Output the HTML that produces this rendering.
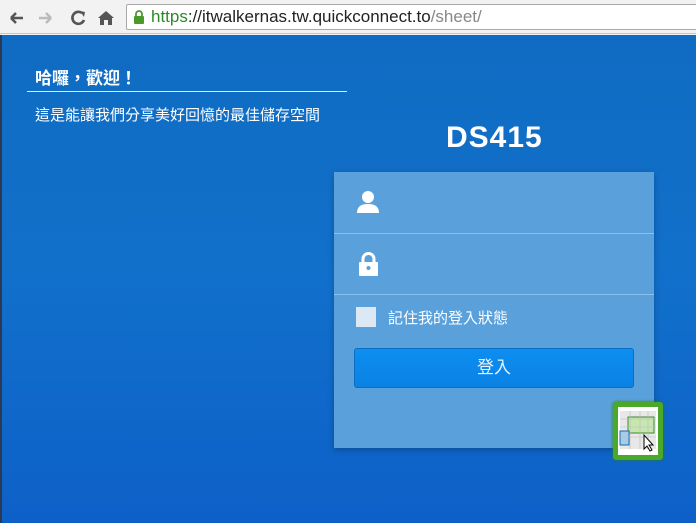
<!DOCTYPE html>
<html><head><meta charset="utf-8"><style>
*{margin:0;padding:0;box-sizing:border-box}
body{width:696px;height:523px;overflow:hidden;position:relative;font-family:"Liberation Sans","Noto Sans CJK TC",sans-serif;background:#f2f2f2}
.bar{position:absolute;left:0;top:0;width:696px;height:34px;background:#f2f2f2;border-bottom:1px solid #c8c8c8}
.url{position:absolute;left:126px;top:4px;width:580px;height:26px;background:#fff;border:1px solid #a9a9a9;border-radius:2px;font-size:17px;line-height:24px;padding-left:24px;color:#222}
.main{position:absolute;left:0;top:35px;width:696px;height:488px;background:linear-gradient(180deg,#106cc2 0%,#1170cb 50%,#0d60c8 100%);border-left:2px solid #2a3a55}
.panel{position:absolute;left:334px;top:172px;width:320px;height:276px;background:#5aa1dc;box-shadow:0 2px 6px rgba(0,0,0,.25)}
.line{position:absolute;left:0;width:320px;height:1px;background:#8cc0ea}
.btn{position:absolute;left:20px;top:176px;width:280px;height:40px;background:linear-gradient(#0d8ef0,#0a82e4);border:1px solid #0a6fc4;border-radius:3px;color:#e8f4ff;font-size:17px;text-align:center;line-height:38px}
</style></head><body>
<div class="bar">
<svg style="position:absolute;left:8px;top:9px" width="110" height="18">
<path d="M3 9h12M3 9l5-5M3 9l5 5" stroke="#555" stroke-width="2.5" fill="none"/>
<path d="M31 9h12M43 9l-5-5M43 9l-5 5" stroke="#bbb" stroke-width="2.5" fill="none"/>
<path d="M74 4a6 6 0 1 0 2 7" stroke="#555" stroke-width="2.6" fill="none"/><path d="M72 2l5 1-1 5z" fill="#555"/>
<path d="M90 9l8-7 8 7h-2v7h-4v-5h-4v5h-4v-7z" fill="#555"/>
</svg>
<div class="url"><svg style="position:absolute;left:6px;top:5px" width="12" height="14"><path d="M3 6V4a3 3 0 0 1 6 0v2" stroke="#4a9a2a" stroke-width="1.8" fill="none"/><rect x="1" y="6" width="10" height="8" rx="1" fill="#4a9a2a"/></svg><span style="color:#2a8a2a">https</span>://itwalkernas.tw.quickconnect.to<span style="color:#888">/sheet/</span></div>
</div>
<div class="main">
<div style="position:absolute;left:33px;top:29px;color:#fff;font-size:17px;font-weight:bold">哈囉，歡迎！</div>
<div style="position:absolute;left:25px;top:56px;width:320px;height:1px;background:#e0ecf8"></div>
<div style="position:absolute;left:33px;top:69px;color:#fff;font-size:15px">這是能讓我們分享美好回憶的最佳儲存空間</div>
<div style="position:absolute;left:444px;top:86px;color:#fff;font-size:30px;font-weight:bold;letter-spacing:1px">DS415</div>
</div>
<div class="panel">
<svg style="position:absolute;left:22px;top:17px" width="26" height="26"><circle cx="12" cy="8" r="6" fill="#fff"/><path d="M1 24c0-7 5-9 11-9s11 2 11 9z" fill="#fff"/></svg>
<div class="line" style="top:61px"></div>
<svg style="position:absolute;left:24px;top:79px" width="22" height="26"><path d="M5 11V8a5.5 5.5 0 0 1 11 0v3" stroke="#fff" stroke-width="3" fill="none"/><rect x="1" y="11" width="19" height="14" rx="1" fill="#fff"/><circle cx="10.5" cy="17" r="2" fill="#5aa1dc"/></svg>
<div class="line" style="top:122px"></div>
<div style="position:absolute;left:22px;top:135px;width:20px;height:20px;background:#dce9f5"></div>
<div style="position:absolute;left:54px;top:135px;color:#fff;font-size:15px">記住我的登入狀態</div>
<div class="btn">登入</div>
</div>
<div style="position:absolute;left:613px;top:402px;width:50px;height:58px;background:#4ca82a;border-radius:3px;box-shadow:0 0 3px #2d7d12">
<svg style="position:absolute;left:5px;top:5px" width="40" height="48"><rect width="40" height="48" fill="#fff"/><rect x="2" y="4" width="36" height="38" fill="#e8e8e8"/><rect x="10" y="10" width="26" height="16" fill="#c8e6b0" stroke="#3a8a2a"/><rect x="2" y="24" width="9" height="14" fill="#a8cce8" stroke="#1a6ab0"/><path d="M2 12h36M2 20h36M2 30h36M12 4v38M22 4v38M30 4v38" stroke="#bbb" stroke-width=".6"/><path d="M26 28v14l3-3 3 5 2-1-3-5h4z" fill="#fff" stroke="#000"/></svg>
</div>
</body></html>
